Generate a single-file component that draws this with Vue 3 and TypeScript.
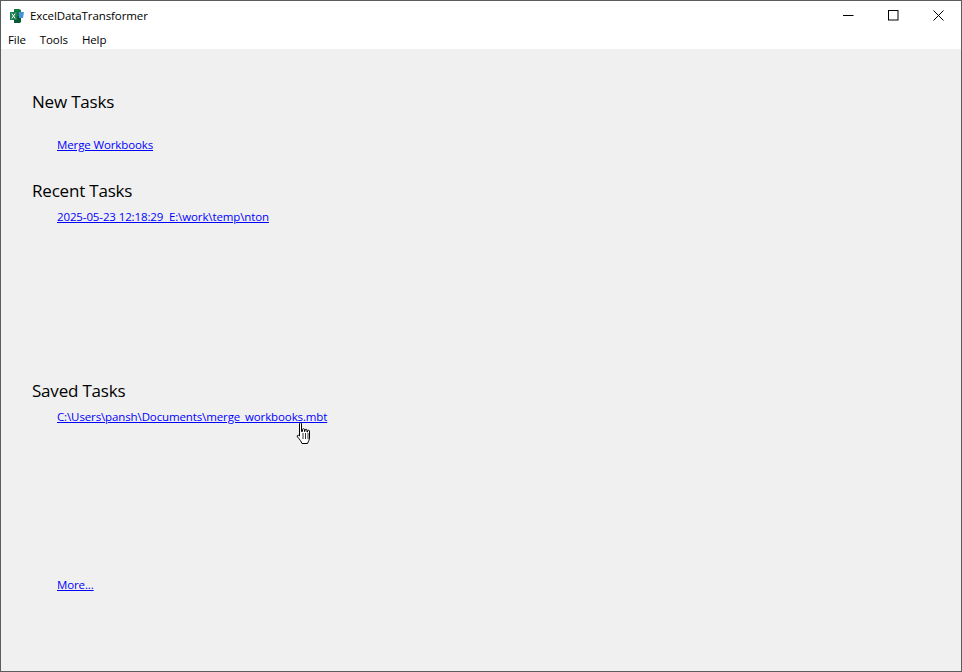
<script setup lang="ts">
const recent: string[] = ['2025-05-23 12:18:29  E:\\work\\temp\\nton']
const saved: string[] = ['C:\\Users\\pansh\\Documents\\merge_workbooks.mbt']
</script>

<template>
  <div class="window">
    <header class="titlebar">
      <svg class="app-icon" width="16" height="16" viewBox="0 0 16 16" aria-hidden="true">
        <path d="M5 1h5l2 1v12l-2 1H5z" fill="#0f7a45" />
        <path d="M5 8h7v6l-2 1H5z" fill="#0b5a36" />
        <path d="M10 4h5l-1 6h-4z" fill="#4a90d9" />
        <rect x="1" y="4" width="7" height="8" fill="#1e7f52" />
        <path d="M2.8 5.6 6.2 10.4M6.2 5.6 2.8 10.4" stroke="#fff" stroke-width="1" />
      </svg>
      <span class="app-title">ExcelDataTransformer</span>
      <div class="controls">
        <button class="ctl" aria-label="Minimize">
          <svg width="11" height="11" viewBox="0 0 11 11"><path d="M0 5.5h10.5" stroke="#000" fill="none" /></svg>
        </button>
        <button class="ctl" aria-label="Maximize">
          <svg width="11" height="11" viewBox="0 0 11 11"><rect x=".5" y=".5" width="9.5" height="9.5" stroke="#000" fill="none" /></svg>
        </button>
        <button class="ctl" aria-label="Close">
          <svg width="11" height="11" viewBox="0 0 11 11"><path d="M.5.5l10 10M10.5.5l-10 10" stroke="#000" fill="none" /></svg>
        </button>
      </div>
    </header>
    <nav class="menubar">
      <span>File</span>
      <span>Tools</span>
      <span>Help</span>
    </nav>
    <main class="content">
      <section class="group group-new">
        <h2>New Tasks</h2>
        <a class="link link-new" href="#">Merge Workbooks</a>
      </section>
      <section class="group group-recent">
        <h2>Recent Tasks</h2>
        <a v-for="r in recent" :key="r" class="link" href="#">{{ r }}</a>
      </section>
      <section class="group group-saved">
        <h2>Saved Tasks</h2>
        <div class="cursor-anchor">
          <a v-for="s in saved" :key="s" class="link" href="#">{{ s }}</a>
          <svg class="cursor" width="16" height="24" viewBox="0 0 16 24" aria-hidden="true">
            <path d="M3.5 1.5c0-1 2-1 2 0v8l1 0v-2c0-1 2-1 2 0v2h.5v-1.500c0-1 2-1 2 0v2h.5v-1c0-1 2-1 2 0v6c0 3-1 4-2 6.500H6c-1-2-2-4-4.500-6.500-1-1.500 .5-2.500 2-1V1.500z" fill="#fff" stroke="#000" stroke-width="1" />
            <path d="M7 11v6M9.500 11v6M12 11v6" stroke="#000" stroke-width=".8" />
          </svg>
        </div>
      </section>
      <a class="link link-more" href="#">More...</a>
    </main>
  </div>
</template>

<style scoped>
.window {
  width: 962px;
  height: 672px;
  box-sizing: border-box;
  border: 1px solid #5c5c5c;
  display: flex;
  flex-direction: column;
  background: #f0f0f0;
  font-family: "Open Sans", "Noto Sans", sans-serif;
  font-size: 12px;
  color: #000;
  overflow: hidden;
}
.titlebar {
  height: 29px;
  display: flex;
  align-items: center;
  background: #fff;
  padding-left: 8px;
}
.app-icon { margin-right: 5px; }
.app-title { font-size: 11.5px; letter-spacing: -0.1px; }
.controls { margin-left: auto; display: flex; height: 29px; }
.ctl {
  width: 45px;
  height: 29px;
  border: 0;
  background: transparent;
  padding: 0;
  display: flex;
  align-items: center;
  justify-content: center;
}
.menubar {
  height: 19px;
  background: #fff;
  display: flex;
  align-items: center;
  gap: 14px;
  padding-left: 7px;
  font-size: 11.5px;
  letter-spacing: -0.1px;
}
.content {
  flex: 1;
  padding: 41px 0 0 31px;
  display: flex;
  flex-direction: column;
  background: #f0f0f0;
}
.group { display: flex; flex-direction: column; align-items: flex-start; }
h2 {
  margin: 0;
  font-size: 17px;
  font-weight: 400;
  line-height: 24px;
  height: 24px;
  letter-spacing: -0.2px;
}
.link {
  display: block;
  margin: 6px 0 0 25px;
  font-size: 11.5px;
  line-height: 16px;
  letter-spacing: -0.12px;
  color: #0000ff;
  text-decoration: underline;
  white-space: pre;
}
.link-new { margin-top: 23px; }
.group-new { height: 89px; }
.group-recent { height: 200px; }
.group-saved { height: 198px; }
.link-more { margin-top: 0; align-self: flex-start; }
.cursor-anchor { position: relative; }
.cursor { position: absolute; left: 264px; top: 19px; }
</style>

<style>
html, body { margin: 0; background: #f0f0f0; }
</style>
